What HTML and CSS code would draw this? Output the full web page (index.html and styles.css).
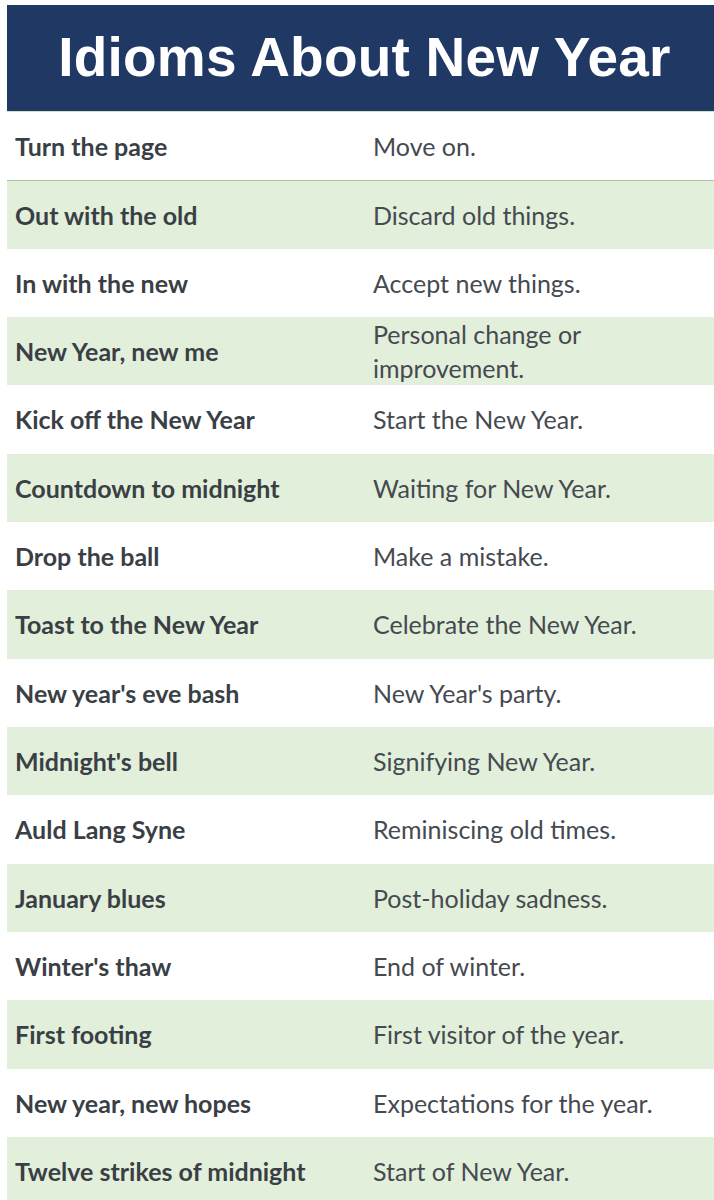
FILE: index.html
```html
<!DOCTYPE html>
<html>
<head>
<meta charset="utf-8">
<link rel="stylesheet" href="styles.css">
</head>
<body>
<div class="sheet">
  <header class="title-bar"><h1>Idioms About New Year</h1></header>
  <div class="table">
    <div class="row"><div class="idiom">Turn the page</div><div class="meaning">Move on.</div></div>
    <div class="row alt first-alt"><div class="idiom">Out with the old</div><div class="meaning">Discard old things.</div></div>
    <div class="row"><div class="idiom">In with the new</div><div class="meaning">Accept new things.</div></div>
    <div class="row alt"><div class="idiom">New Year, new me</div><div class="meaning">Personal change or<br>improvement.</div></div>
    <div class="row"><div class="idiom">Kick off the New Year</div><div class="meaning">Start the New Year.</div></div>
    <div class="row alt"><div class="idiom">Countdown to midnight</div><div class="meaning">Waiting for New Year.</div></div>
    <div class="row"><div class="idiom">Drop the ball</div><div class="meaning">Make a mistake.</div></div>
    <div class="row alt"><div class="idiom">Toast to the New Year</div><div class="meaning">Celebrate the New Year.</div></div>
    <div class="row"><div class="idiom">New year's eve bash</div><div class="meaning">New Year's party.</div></div>
    <div class="row alt"><div class="idiom">Midnight's bell</div><div class="meaning">Signifying New Year.</div></div>
    <div class="row"><div class="idiom">Auld Lang Syne</div><div class="meaning">Reminiscing old times.</div></div>
    <div class="row alt"><div class="idiom">January blues</div><div class="meaning">Post-holiday sadness.</div></div>
    <div class="row"><div class="idiom">Winter's thaw</div><div class="meaning">End of winter.</div></div>
    <div class="row alt"><div class="idiom">First footing</div><div class="meaning">First visitor of the year.</div></div>
    <div class="row"><div class="idiom">New year, new hopes</div><div class="meaning">Expectations for the year.</div></div>
    <div class="row alt"><div class="idiom">Twelve strikes of midnight</div><div class="meaning">Start of New Year.</div></div>
  </div>
</div>
</body>
</html>
```
FILE: styles.css
```css
html, body {
  margin: 0;
  padding: 0;
  background: #ffffff;
}
body {
  width: 714px;
  height: 1200px;
  overflow: hidden;
}
.sheet {
  padding: 5px 0 0 7px;
}
.title-bar {
  background: #203864;
  height: 106px;
  display: flex;
  align-items: center;
  justify-content: center;
  border-bottom: 1px solid #cfe0c4;
}
.title-bar h1 {
  margin: 0;
  color: #ffffff;
  font-family: "Liberation Sans", Arial, sans-serif;
  font-weight: 700;
  font-size: 55px;
  letter-spacing: 0.2px;
  padding-left: 8px;
  padding-bottom: 2px;
}
.table {
  display: grid;
  grid-auto-rows: 68.33px;
}
.row {
  display: grid;
  grid-template-columns: 366px 1fr;
  align-items: center;
  font-family: "Lato", "Open Sans", sans-serif;
  font-size: 25px;
  color: #3a3f46;
}
.row.alt {
  background: #e2efda;
}
.row.first-alt {
  border-top: 1px solid #a9c39b;
}
.idiom {
  font-weight: 700;
  padding-left: 8px;
}
.meaning {
  font-weight: 400;
  color: #454a50;
  line-height: 34px;
}
```
